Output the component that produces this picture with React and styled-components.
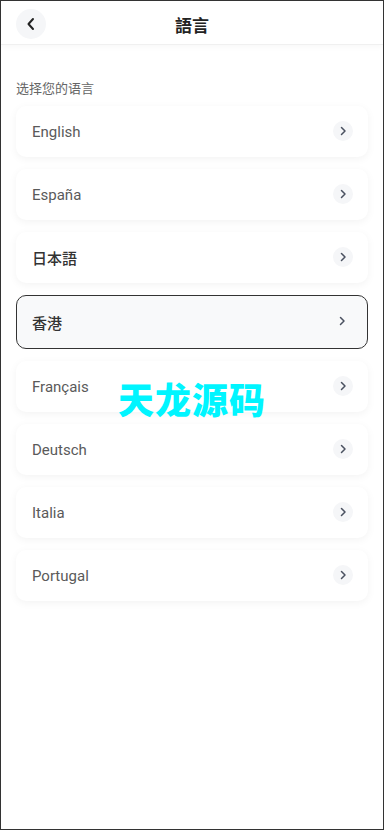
import React from "react";
import styled, { createGlobalStyle } from "styled-components";

const Global = createGlobalStyle`
  html, body { margin: 0; padding: 0; background: #fff; }
  body { font-family: Roboto, "Noto Sans", "Noto Sans CJK SC", sans-serif; }
  * { box-sizing: border-box; }
`;

const Frame = styled.div`
  position: relative;
  width: 384px;
  height: 830px;
  border: 1px solid #333;
  background: #fff;
  display: flex;
  flex-direction: column;
  overflow: hidden;
`;

const Header = styled.header`
  height: 44px;
  flex: none;
  display: grid;
  grid-template-columns: 60px 1fr 60px;
  align-items: center;
  padding: 0 15px;
  border-bottom: 1px solid #f0f0f0;
  box-shadow: 0 2px 6px rgba(0, 0, 0, 0.03);
  background: #fff;
`;

const BackButton = styled.button`
  width: 30px;
  height: 30px;
  border-radius: 50%;
  border: none;
  background: #f5f6f8;
  display: flex;
  align-items: center;
  justify-content: center;
  padding: 0;
  margin-top: 3px;
`;

const Title = styled.h1`
  margin: 0;
  text-align: center;
  font-family: "Noto Sans CJK TC", "Noto Sans CJK SC", sans-serif;
  font-size: 17px;
  font-weight: 700;
  color: #222;
  line-height: 24px;
  margin-top: 4px;
`;

const Content = styled.main`
  padding: 34px 15px 0;
  display: flex;
  flex-direction: column;
`;

const Label = styled.div`
  font-family: "Noto Sans CJK SC", sans-serif;
  font-size: 13px;
  line-height: 18px;
  color: #666;
  margin-bottom: 9px;
`;

const List = styled.div`
  display: flex;
  flex-direction: column;
  gap: 12px;
`;

const Card = styled.div`
  height: ${(p) => (p.$active ? "54px" : "51px")};
  border-radius: 10px;
  background: ${(p) => (p.$active ? "#f8f9fa" : "#fff")};
  border: ${(p) => (p.$active ? "1px solid #333" : "none")};
  box-shadow: ${(p) => (p.$active ? "none" : "0 2px 8px rgba(0, 0, 0, 0.05)")};
  display: flex;
  align-items: center;
  justify-content: space-between;
  padding: ${(p) => (p.$active ? "0 15px 0 15px" : "0 15px 0 16px")};
`;

const Name = styled.span`
  font-family: Roboto, "Noto Sans CJK JP", "Noto Sans CJK SC", sans-serif;
  font-size: 15px;
  color: ${(p) => (p.$cjk ? "#333" : "#5a5a5a")};
  font-weight: ${(p) => (p.$cjk ? 500 : 400)};
`;

const Arrow = styled.span`
  width: 20px;
  height: 20px;
  border-radius: 50%;
  background: ${(p) => (p.$active ? "transparent" : "#f5f6f8")};
  display: flex;
  align-items: center;
  justify-content: center;
  margin-top: -2px;
`;

const Watermark = styled.div`
  position: absolute;
  left: 117px;
  top: 374px;
  font-family: "Noto Sans CJK SC", sans-serif;
  font-weight: 900;
  font-size: 36px;
  line-height: 46px;
  color: #00f5ff;
  letter-spacing: 1px;
  pointer-events: none;
`;

const languages = [
  { name: "English" },
  { name: "España" },
  { name: "日本語", cjk: true },
  { name: "香港", cjk: true, active: true },
  { name: "Français" },
  { name: "Deutsch" },
  { name: "Italia" },
  { name: "Portugal" },
];

const Chevron = () => (
  <svg width="8" height="10" viewBox="0 0 8 10">
    <path d="M2.5 1.5 L6 5 L2.5 8.5" fill="none" stroke="#4a5160" strokeWidth="1.5" strokeLinecap="round" strokeLinejoin="round" />
  </svg>
);

export default function App() {
  return (
    <>
      <Global />
      <Frame>
        <Header>
          <BackButton aria-label="back">
            <svg width="12" height="14" viewBox="0 0 12 14">
              <path d="M8 2 L3.5 7 L8 12" fill="none" stroke="#222" strokeWidth="2" strokeLinecap="round" strokeLinejoin="round" />
            </svg>
          </BackButton>
          <Title>語言</Title>
          <span />
        </Header>
        <Content>
          <Label>选择您的语言</Label>
          <List>
            {languages.map((l) => (
              <Card key={l.name} $active={l.active}>
                <Name $cjk={l.cjk}>{l.name}</Name>
                <Arrow $active={l.active}>
                  <Chevron />
                </Arrow>
              </Card>
            ))}
          </List>
        </Content>
        <Watermark>天龙源码</Watermark>
      </Frame>
    </>
  );
}
